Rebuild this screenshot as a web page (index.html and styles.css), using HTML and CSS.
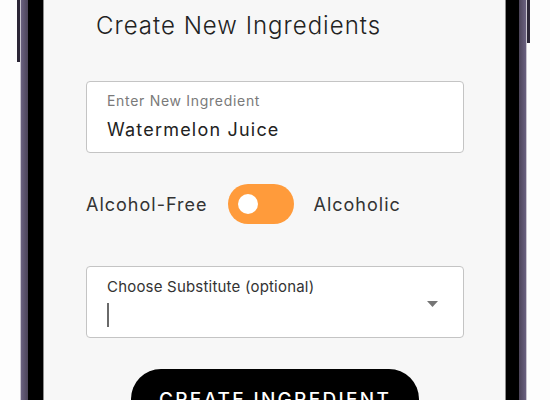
FILE: index.html
```html
<!DOCTYPE html>
<html lang="en">
<head>
    <meta charset="UTF-8">
    <meta name="viewport" content="width=device-width, initial-scale=1.0">
    <title>Create New Ingredients</title>
    <link rel="stylesheet" href="styles.css">
</head>
<body>
    <div class="side-btn side-btn-left"></div>
    <div class="phone">
        <div class="bezel">
            <div class="screen">
                <h1 class="title">Create New Ingredients</h1>

                <div class="field">
                    <label class="field-label" for="ingredient">Enter New Ingredient</label>
                    <input id="ingredient" class="field-input" type="text" value="Watermelon Juice">
                </div>

                <div class="toggle-row">
                    <span class="toggle-text">Alcohol-Free</span>
                    <button class="toggle" type="button"><span class="knob"></span></button>
                    <span class="toggle-text">Alcoholic</span>
                </div>

                <div class="select">
                    <div class="select-body">
                        <span class="select-label">Choose Substitute (optional)</span>
                        <span class="caret"></span>
                    </div>
                    <svg class="arrow" width="11" height="6" viewBox="0 0 11 6">
                        <path d="M0 0 L11 0 L5.5 6 Z" fill="#757575"/>
                    </svg>
                </div>

                <div class="actions">
                    <button class="create-btn" type="button">Create Ingredient</button>
                </div>
            </div>
        </div>
    </div>
    <div class="side-btn side-btn-right"></div>
</body>
</html>
```

FILE: styles.css
```css
body {
    font-family: Inter, "Noto Sans", sans-serif;
    background-color: #fdfdfd;
    margin: 0;
    padding-left: 17px;
    width: 550px;
    height: 400px;
    box-sizing: border-box;
    overflow: hidden;
    display: flex;
    align-items: flex-start;
}

.side-btn {
    width: 3px;
    background: #2b2636;
    flex-shrink: 0;
}

.side-btn-left {
    height: 62px;
}

.side-btn-right {
    height: 43px;
}

.phone {
    width: 507px;
    height: 400px;
    box-sizing: border-box;
    border-left: 1px solid #c9c5cf;
    border-right: 1px solid #c9c5cf;
    padding: 0 7px;
    background: linear-gradient(to right, #6a6180 0, #4c4459 7px, #4c4459 calc(100% - 7px), #6a6180 100%);
    flex-shrink: 0;
}

.bezel {
    height: 100%;
    background: #000;
    padding: 0 13px 0 15px;
}

.screen {
    height: 100%;
    box-sizing: border-box;
    background: #f7f7f7;
    border-left: 1px solid #8d8d8d;
    border-right: 1px solid #8d8d8d;
    padding: 11px 41px 0 42px;
}

.title {
    margin: 0 0 40px 10px;
    font-size: 24px;
    line-height: 30px;
    font-weight: 300;
    letter-spacing: 1px;
    color: #222;
}

.field {
    height: 72px;
    box-sizing: border-box;
    background: #fff;
    border: 1px solid #c4c4c4;
    border-radius: 4px;
    padding: 10px 20px;
}

.field-label {
    display: block;
    font-size: 14px;
    line-height: 17px;
    letter-spacing: 0.7px;
    color: #7a7a7a;
}

.field-input {
    display: block;
    margin-top: 10px;
    width: 100%;
    padding: 0;
    border: none;
    outline: none;
    background: none;
    font-family: inherit;
    font-size: 18px;
    line-height: 22px;
    letter-spacing: 1.2px;
    color: #222;
}

.toggle-row {
    display: flex;
    align-items: center;
    gap: 20px;
    margin-top: 31px;
}

.toggle-text {
    font-size: 18px;
    letter-spacing: 1px;
    color: #333;
}

.toggle {
    width: 66px;
    height: 40px;
    border: none;
    border-radius: 20px;
    background: #ff9b3b;
    padding: 0 0 0 10px;
    display: flex;
    align-items: center;
    cursor: pointer;
}

.knob {
    width: 20px;
    height: 20px;
    border-radius: 50%;
    background: #fff;
}

.select {
    margin-top: 42px;
    height: 72px;
    box-sizing: border-box;
    background: #fff;
    border: 1px solid #c4c4c4;
    border-radius: 4px;
    padding: 11px 25px 0 20px;
    display: flex;
    align-items: flex-start;
}

.select-body {
    flex: 1;
    display: flex;
    flex-direction: column;
    align-items: flex-start;
}

.select-label {
    font-size: 15px;
    line-height: 18px;
    letter-spacing: 0.2px;
    color: #333;
}

.caret {
    margin-top: 7px;
    width: 2px;
    height: 24px;
    background: #6a6a6a;
}

.arrow {
    margin-top: 23px;
}

.actions {
    display: flex;
    justify-content: center;
    margin-top: 31px;
}

.create-btn {
    width: 288px;
    height: 60px;
    border: none;
    border-radius: 30px;
    background: #000;
    color: #fff;
    font-family: inherit;
    font-size: 19px;
    font-weight: 500;
    letter-spacing: 2.3px;
    text-transform: uppercase;
    cursor: pointer;
}
```
